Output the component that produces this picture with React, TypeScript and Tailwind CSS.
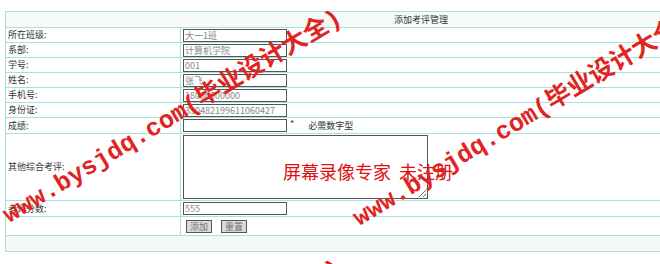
const font = { fontFamily: '"Noto Sans CJK SC", "Liberation Sans", sans-serif' };

const rows = [
  { label: "所在班级:", value: "大一1班" },
  { label: "系部:", value: "计算机学院" },
  { label: "学号:", value: "001" },
  { label: "姓名:", value: "张飞" },
  { label: "手机号:", value: "18000000000" },
  { label: "身份证:", value: "330482199611060427" },
];

const Field = ({ value }: { value: string }) => (
  <input
    readOnly
    value={value}
    className="ml-[2px] w-[104px] h-[13px] border border-[#555] bg-white px-[1px] text-[9px] leading-[11px] text-[#888] outline-none"
  />
);

const Watermark = ({ className }: { className: string }) => (
  <div
    className={
      "pointer-events-none absolute origin-left whitespace-nowrap text-[25px] leading-[28px] font-bold text-[#e0241f] " +
      className
    }
    style={{ fontFamily: '"Liberation Mono", "Noto Sans CJK SC", monospace' }}
  >
    www.bysjdq.com(毕业设计大全)
  </div>
);

export default function App() {
  return (
    <div className="relative w-[660px] h-[264px] overflow-hidden bg-white pt-[11px]" style={font}>
      <div className="ml-[5px] w-[832px] border border-[#a4e2df] text-[9px] text-[#333]">
        <div className="h-[16px] border-b border-[#a4e2df] bg-[#f6fbf8] flex items-center justify-center">
          添加考评管理
        </div>

        {rows.map((r) => (
          <div key={r.label} className="flex h-[15px] border-b border-[#a4e2df]">
            <div className="w-[175px] border-r border-[#a4e2df] pl-[2px] flex items-center">{r.label}</div>
            <div className="flex items-center">
              <Field value={r.value} />
            </div>
          </div>
        ))}

        <div className="flex h-[16px] border-b border-[#a4e2df]">
          <div className="w-[175px] border-r border-[#a4e2df] pl-[2px] flex items-center">成绩:</div>
          <div className="flex items-center">
            <Field value="" />
            <span className="ml-[3px] mt-[-3px]">*</span>
            <span className="ml-[14px]">必需数字型</span>
          </div>
        </div>

        <div className="flex h-[67px] border-b border-[#a4e2df]">
          <div className="w-[175px] border-r border-[#a4e2df] pl-[2px] flex items-center">其他综合考评:</div>
          <div className="flex items-center">
            <textarea
              readOnly
              className="ml-[2px] w-[245px] h-[64px] border border-[#555] bg-white outline-none"
            />
          </div>
        </div>

        <div className="flex h-[16px] border-b border-[#a4e2df]">
          <div className="w-[175px] border-r border-[#a4e2df] pl-[2px] flex items-center">考评分数:</div>
          <div className="flex items-center">
            <Field value="555" />
          </div>
        </div>

        <div className="flex h-[19px] border-b border-[#a4e2df]">
          <div className="w-[175px] border-r border-[#a4e2df]" />
          <div className="flex items-center gap-[9px] pl-[5px]">
            <button className="h-[13px] px-[3px] border border-[#555] bg-[#d9d9d9] text-[9px] leading-[11px] text-[#777]">
              添加
            </button>
            <button className="h-[13px] px-[3px] border border-[#555] bg-[#d9d9d9] text-[9px] leading-[11px] text-[#777]">
              重置
            </button>
          </div>
        </div>

        <div className="h-[15px] bg-[#f4f8f6]" />
      </div>

      <div
        className="pointer-events-none absolute left-[283px] top-[160px] text-[18px] leading-[22px] text-[#e01010] whitespace-nowrap"
        style={{ fontFamily: '"Noto Sans CJK SC", serif' }}
      >
        屏幕录像专家&nbsp;&nbsp;未注册
      </div>

      <Watermark className="left-[6px] top-[204px] -rotate-[31deg]" />
      <Watermark className="left-[356px] top-[207px] -rotate-[31deg]" />
      <Watermark className="left-[6px] top-[454px] -rotate-[31deg]" />
    </div>
  );
}
